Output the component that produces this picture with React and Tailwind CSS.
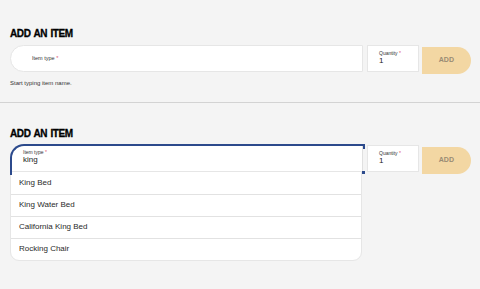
import React from 'react';

const FONT = { fontFamily: '"Liberation Sans", Arial, sans-serif' };
const ROWS = ['King Bed', 'King Water Bed', 'California King Bed', 'Rocking Chair'];

const Heading = () => (
  <h2 className="text-[10px] leading-[12px] font-black uppercase tracking-[-0.4px] [word-spacing:1px] text-black [-webkit-text-stroke:0.3px_black]">
    Add an item
  </h2>
);

const Quantity = () => (
  <div className="w-[52px] h-[27px] bg-white border border-[#e6e6e6] pl-[11px] pt-[4px]">
    <div className="text-[5px] leading-[6px] text-[#333]">
      Quantity <span className="text-[#e0506a]">*</span>
    </div>
    <div className="text-[8px] leading-[10px] text-[#222]">1</div>
  </div>
);

const AddButton = () => (
  <button className="w-[49px] h-[27px] bg-[#f3d7a3] rounded-r-full text-[7px] font-bold tracking-wide text-[#9a8c74]">
    ADD
  </button>
);

export default function App() {
  return (
    <div className="min-h-screen bg-[#f4f4f4]" style={FONT}>
      {/* Empty state */}
      <div className="pt-[28px] pl-[10px] pr-[9px] pb-[15px] border-b border-[#d3d3d3]">
        <Heading />
        <div className="flex mt-[5px]">
          <div className="flex-1 h-[27px] bg-white border border-[#e6e6e6] rounded-l-full flex items-center pl-[21px]">
            <span className="text-[5.5px] text-[#333]">
              Item type <span className="text-[#e0506a]">*</span>
            </span>
          </div>
          <div className="ml-[4px]"><Quantity /></div>
          <div className="ml-[3px]"><AddButton /></div>
        </div>
        <p className="mt-[5px] text-[6px] leading-[8px] text-[#333]">Start typing item name.</p>
      </div>

      {/* Open dropdown state */}
      <div className="pt-[25px] pl-[10px] pr-[9px]">
        <Heading />
        <div className="flex items-start mt-[4px]">
          <div className="flex-1">
            <div className="relative h-[27px] bg-white border-t-2 border-l-2 border-[#2c4a8c] rounded-tl-[14px] pl-[11px] pt-[3px]">
              <div className="text-[5px] leading-[6px] text-[#333]">
                Item type <span className="text-[#e0506a]">*</span>
              </div>
              <div className="text-[8px] leading-[10px] text-[#222]">king</div>
              <span className="absolute -right-[2px] -top-[2px] w-[2px] h-[5px] bg-[#2c4a8c]" />
              <span className="absolute right-0 top-0 bottom-0 w-px bg-[#e0e0e0]" />
              <span className="absolute -right-[2px] -bottom-[3px] w-[3px] h-[3px] bg-[#2c4a8c]" />
              <span className="absolute -left-[2px] -bottom-[4px] w-[2px] h-[4px] bg-[#2c4a8c]" />
            </div>
            <ul className="bg-white border border-[#e6e6e6] rounded-b-[9px] mr-[1px]">
              {ROWS.map((r, i) => (
                <li
                  key={r}
                  className={`h-[22px] flex items-center pl-[8px] text-[8px] text-[#2a2a2a] ${i > 0 ? 'border-t border-[#e2e2e2]' : ''}`}
                >
                  {r}
                </li>
              ))}
            </ul>
          </div>
          <div className="ml-[4px] mt-[1px]"><Quantity /></div>
          <div className="ml-[3px] mt-[1px]"><AddButton /></div>
        </div>
      </div>
    </div>
  );
}
